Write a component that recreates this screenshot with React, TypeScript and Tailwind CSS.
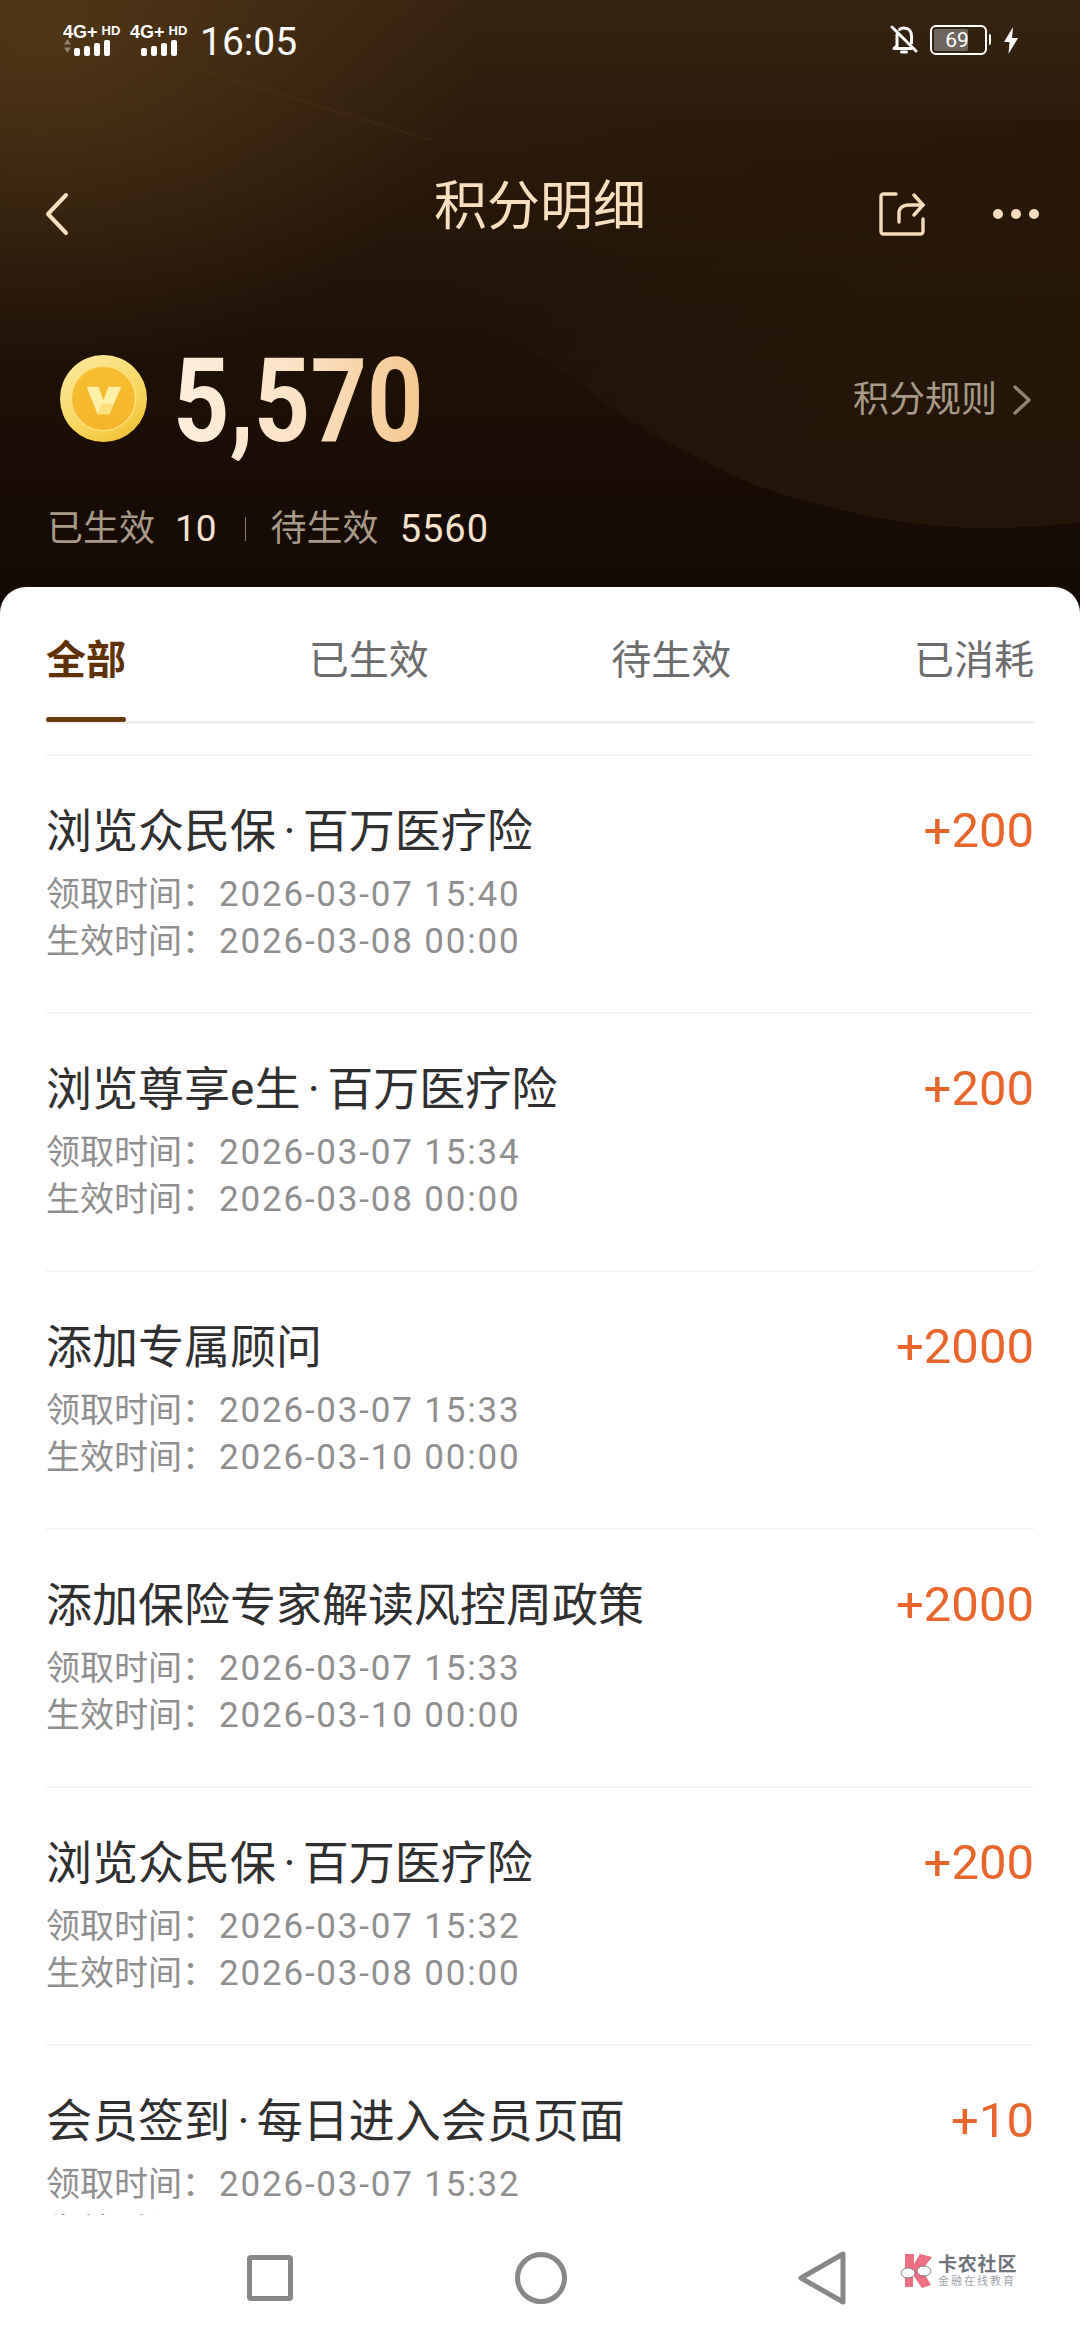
import React from 'react';

const tabs = ['全部', '已生效', '待生效', '已消耗'];

const records = [
  { title: '浏览众民保 · 百万医疗险', amount: '+200', received: '2026-03-07 15:40', active: '2026-03-08 00:00' },
  { title: '浏览尊享e生 · 百万医疗险', amount: '+200', received: '2026-03-07 15:34', active: '2026-03-08 00:00' },
  { title: '添加专属顾问', amount: '+2000', received: '2026-03-07 15:33', active: '2026-03-10 00:00' },
  { title: '添加保险专家解读风控周政策', amount: '+2000', received: '2026-03-07 15:33', active: '2026-03-10 00:00' },
  { title: '浏览众民保 · 百万医疗险', amount: '+200', received: '2026-03-07 15:32', active: '2026-03-08 00:00' },
  { title: '会员签到 · 每日进入会员页面', amount: '+10', received: '2026-03-07 15:32', active: '2026-03-08 00:00' },
];

function SignalGroup({ arrows }: { arrows?: boolean }) {
  const bars = [8, 10, 13, 16];
  return (
    <div className="relative flex h-[32px] w-[57px] flex-col">
      <div className="flex h-[16px] items-start font-['Liberation_Sans',sans-serif] font-bold leading-[16px] text-white">
        <span className="text-[18px] leading-[16px]">4G+</span>
        <span className="ml-[4px] text-[13px] leading-[13px]">HD</span>
      </div>
      <div className="mr-[10px] flex h-[16px] items-end justify-end gap-[4px]">
        {bars.map((h) => (
          <span key={h} className="w-[6px] rounded-[2px] bg-white" style={{ height: h }} />
        ))}
      </div>
      {arrows && (
        <svg className="absolute left-0 top-[14px]" width="9" height="16" viewBox="0 0 9 16">
          <path d="M4.500 1 8 6.500H1z M4.500 15 1 9.500h7z" fill="#8d8272" />
        </svg>
      )}
    </div>
  );
}

function StatusBar() {
  return (
    <div className="flex h-[80px] items-center justify-between pl-[63px] pr-[61px]">
      <div className="flex items-center gap-[10px]">
        <SignalGroup arrows />
        <SignalGroup />
        <span className="ml-[3px] pt-[4px] text-[39px] leading-none text-white">16:05</span>
      </div>
      <div className="flex items-center">
        <svg width="28" height="30" viewBox="0 0 28 30" fill="none" stroke="white" strokeWidth="3" strokeLinecap="round" strokeLinejoin="round">
          <path d="M7 9.500V21l-3 2.500h17" />
          <path d="M9.500 4.500C11 3.300 12.500 3 14 3c4.500 0 7.500 3 7.500 8v7" />
          <path d="M11.500 27h5" />
          <path d="M2 2l24 24" />
        </svg>
        <div className="relative ml-[12px] flex h-[30px] w-[57px] items-center rounded-[6px] border-[2.500px] border-white p-[2px]">
          <div className="h-full w-[70%] rounded-[2px] bg-[#6e675f]" />
          <span className="absolute inset-0 flex items-center justify-center pr-[3px] text-[21px] leading-none text-white">69</span>
          <span className="absolute -right-[6px] top-[7px] h-[11px] w-[2px] rounded-r bg-white" />
        </div>
        <svg className="ml-[16px]" width="16" height="27" viewBox="0 0 16 27">
          <path d="M10 0 1 15h5.500l-1 12L15 11H9z" fill="white" />
        </svg>
      </div>
    </div>
  );
}

function NavBar() {
  return (
    <div className="relative mt-[89px] flex h-[76px] items-center justify-between pl-[45px] pr-[41px] pt-[14px]">
      <svg width="24" height="44" viewBox="0 0 24 44" fill="none" stroke="#f8dfc0" strokeWidth="4" strokeLinecap="round" strokeLinejoin="round">
        <path d="M21 3 3 22 21 41" />
      </svg>
      <h1 className="absolute inset-x-0 top-[8px] text-center text-[53px] font-normal leading-[60px] text-[#f8dfc0]">积分明细</h1>
      <div className="flex items-center gap-[68px]">
        <svg width="46" height="44" viewBox="0 0 46 44" fill="none" stroke="#f5dcbd" strokeWidth="3.400" strokeLinecap="round" strokeLinejoin="round">
          <path d="M17 2H4.500A2.500 2.500 0 0 0 2 4.500V39.500A2.500 2.500 0 0 0 4.500 42H41.500A2.500 2.500 0 0 0 44 39.500V27" />
          <path d="M20 30V21C20 16 24 13 29 13H44" />
          <path d="M35 3 44 13 35 23" />
        </svg>
        <div className="flex gap-[8px]">
          <span className="h-[10px] w-[10px] rounded-full bg-[#f5dcbd]" />
          <span className="h-[10px] w-[10px] rounded-full bg-[#f5dcbd]" />
          <span className="h-[10px] w-[10px] rounded-full bg-[#f5dcbd]" />
        </div>
      </div>
    </div>
  );
}

function Coin() {
  return (
    <svg width="87" height="87" viewBox="0 0 88 88">
      <defs>
        <linearGradient id="coinRim" x1="0.2" y1="0" x2="0.8" y2="1">
          <stop offset="0" stopColor="#fbe89a" />
          <stop offset="0.6" stopColor="#f8d760" />
          <stop offset="1" stopColor="#efc030" />
        </linearGradient>
        <linearGradient id="coinFace" x1="0.5" y1="0" x2="0.5" y2="1">
          <stop offset="0" stopColor="#f8be30" />
          <stop offset="1" stopColor="#f5b52b" />
        </linearGradient>
      </defs>
      <circle cx="44" cy="44" r="44" fill="url(#coinRim)" />
      <circle cx="44" cy="44" r="32.500" fill="url(#coinFace)" stroke="#fbdf7c" strokeWidth="1.500" />
      <path d="M27 32H39L44 46 49 32H62L50 60H38Z" fill="#fdf0a8" />
      <path d="M38 60H50L54.500 49H42Z" fill="#fbe07c" />
    </svg>
  );
}

function Summary() {
  return (
    <div className="mt-[93px] pl-[50px] pr-[48px]">
      <div className="flex h-[120px] items-center justify-between">
        <div className="flex items-center">
          <div className="ml-[10px]">
            <Coin />
          </div>
          <span className="ml-[26px] mt-[6px] origin-left scale-x-[0.85] bg-gradient-to-r from-[#fdeedd] via-[#fbe2c5] to-[#f4c78f] bg-clip-text text-[116px] font-bold leading-[120px] text-transparent">
            5,570
          </span>
        </div>
        <div className="mt-[4px] flex items-center">
          <span className="text-[36px] leading-none text-[#a89a88]">积分规则</span>
          <svg className="ml-[15px]" width="20" height="30" viewBox="0 0 20 30" fill="none" stroke="#8f8373" strokeWidth="3.400" strokeLinecap="round" strokeLinejoin="round">
            <path d="M3 2 17 15 3 28" />
          </svg>
        </div>
      </div>
      <div className="-ml-[3px] mt-[48px] flex items-center leading-[46px]">
        <span className="text-[36px] text-[#a89a8a]">已生效</span>
        <span className="ml-[20px] text-[37px] text-[#f5e3cd]">10</span>
        <span className="ml-[28px] h-[24px] w-[1px] bg-[#8a7c6c]" />
        <span className="ml-[25px] text-[36px] text-[#a89a8a]">待生效</span>
        <span className="ml-[21px] text-[38px] tracking-[1px] text-[#f5e3cd]">5560</span>
      </div>
    </div>
  );
}

function Tabs() {
  return (
    <div className="mx-[46px] flex h-[137px] items-start justify-between border-b-[3px] border-[#efefef] pt-[49px]">
      {tabs.map((tab, i) => (
        <div key={tab} className="relative">
          <span className={i === 0 ? "text-[40px] font-bold leading-[50px] text-[#5f3206]" : "text-[40px] leading-[50px] text-[#6d6d6d]"}>{tab}</span>
          {i === 0 && <span className="absolute -bottom-[36px] left-0 right-0 h-[5px] rounded-full bg-[#6a3a0b]" />}
        </div>
      ))}
    </div>
  );
}

function RecordRow({ title, amount, received, active }: (typeof records)[number]) {
  return (
    <div className="h-[258px] border-t-[2px] border-[#f5f5f5] pt-[45px]">
      <div className="flex items-center justify-between">
        <span className="text-[46px] leading-[60px] text-[#303030] [word-spacing:-4px]">{title}</span>
        <span className="text-[49px] leading-[60px] text-[#e8662b]">{amount}</span>
      </div>
      <div className="mt-[10px] text-[34px] leading-[46px] text-[#8f8f8f]">
        <p>领取时间：<span className="ml-[3px] text-[35px] tracking-[1.800px]">{received}</span></p>
        <p>生效时间：<span className="ml-[3px] text-[35px] tracking-[1.800px]">{active}</span></p>
      </div>
    </div>
  );
}

function BottomNav() {
  return (
    <div className="relative flex h-[125px] items-center bg-white">
      <div className="ml-[247px] h-[46px] w-[46px] rounded-[4px] border-[5px] border-[#878787]" />
      <div className="ml-[222px] h-[52px] w-[52px] rounded-full border-[5px] border-[#878787]" />
      <svg className="ml-[231px]" width="48" height="54" viewBox="0 0 48 54" fill="none" stroke="#878787" strokeWidth="5" strokeLinejoin="round">
        <path d="M45 3V51L3 27Z" />
      </svg>
      {/* watermark logo in the corner */}
      <div className="absolute left-[900px] top-[38px] flex items-center">
        <svg width="34" height="36" viewBox="0 0 34 36">
          <path d="M5 1H14V11L20 1 32 4 22 17 31 32 22 35 13 22V34H5Z" fill="#ec6f83" />
          <ellipse cx="8" cy="20" rx="7" ry="5" fill="white" stroke="#666" strokeWidth="0.800" />
          <ellipse cx="24" cy="18" rx="7" ry="5" fill="white" stroke="#666" strokeWidth="0.800" />
        </svg>
        <div className="ml-[4px] flex flex-col">
          <span className="text-[19px] font-bold leading-[21px] tracking-[0.800px] text-[#70757c]">卡农社区</span>
          <span className="mt-[1px] text-[11px] leading-[12px] tracking-[2px] text-[#a0a4aa]">金融在线教育</span>
        </div>
      </div>
    </div>
  );
}

export default function App() {
  return (
    <div className="relative flex h-[2340px] w-[1080px] flex-col overflow-hidden bg-white font-['Roboto','Noto_Sans_CJK_SC',sans-serif]">
      <div className="relative h-[620px] shrink-0 bg-gradient-to-b from-[#362310] via-[#1f1208] via-50% to-[#130904]">
        {/* warm glow in the top corner and the soft wave behind the rules link */}
        <svg className="absolute inset-0" width="1080" height="620" viewBox="0 0 1080 620">
          <defs>
            <radialGradient id="glow" cx="0" cy="0" r="1" gradientUnits="userSpaceOnUse" gradientTransform="translate(40 30) scale(440 340)">
              <stop offset="0" stopColor="#5e411b" stopOpacity="0.65" />
              <stop offset="1" stopColor="#5e411b" stopOpacity="0" />
            </radialGradient>
            <linearGradient id="wave" gradientUnits="userSpaceOnUse" x1="420" y1="300" x2="760" y2="520">
              <stop offset="0" stopColor="#261709" stopOpacity="0" />
              <stop offset="0.5" stopColor="#261709" stopOpacity="0.55" />
              <stop offset="1" stopColor="#261709" stopOpacity="0.75" />
            </linearGradient>
          </defs>
          <rect width="1080" height="620" fill="url(#glow)" />
          <path d="M380 280C470 310 540 350 600 400 650 435 700 460 750 483 830 512 920 530 1000 528 1030 527 1060 525 1080 522V120H520Z" fill="url(#wave)" />
          <path d="M183 65C250 85 350 115 430 140" fill="none" stroke="#5a4120" strokeOpacity="0.22" strokeWidth="2" />
        </svg>
        <div className="relative">
          <StatusBar />
          <NavBar />
          <Summary />
        </div>
      </div>
      <div className="relative -mt-[33px] flex min-h-0 flex-1 flex-col rounded-t-[26px] bg-white">
        <Tabs />
        <div className="mt-[30px] min-h-0 flex-1 overflow-hidden px-[46px]">
          {records.map((r, i) => (
            <RecordRow key={i} {...r} />
          ))}
        </div>
        <BottomNav />
      </div>
    </div>
  );
}
